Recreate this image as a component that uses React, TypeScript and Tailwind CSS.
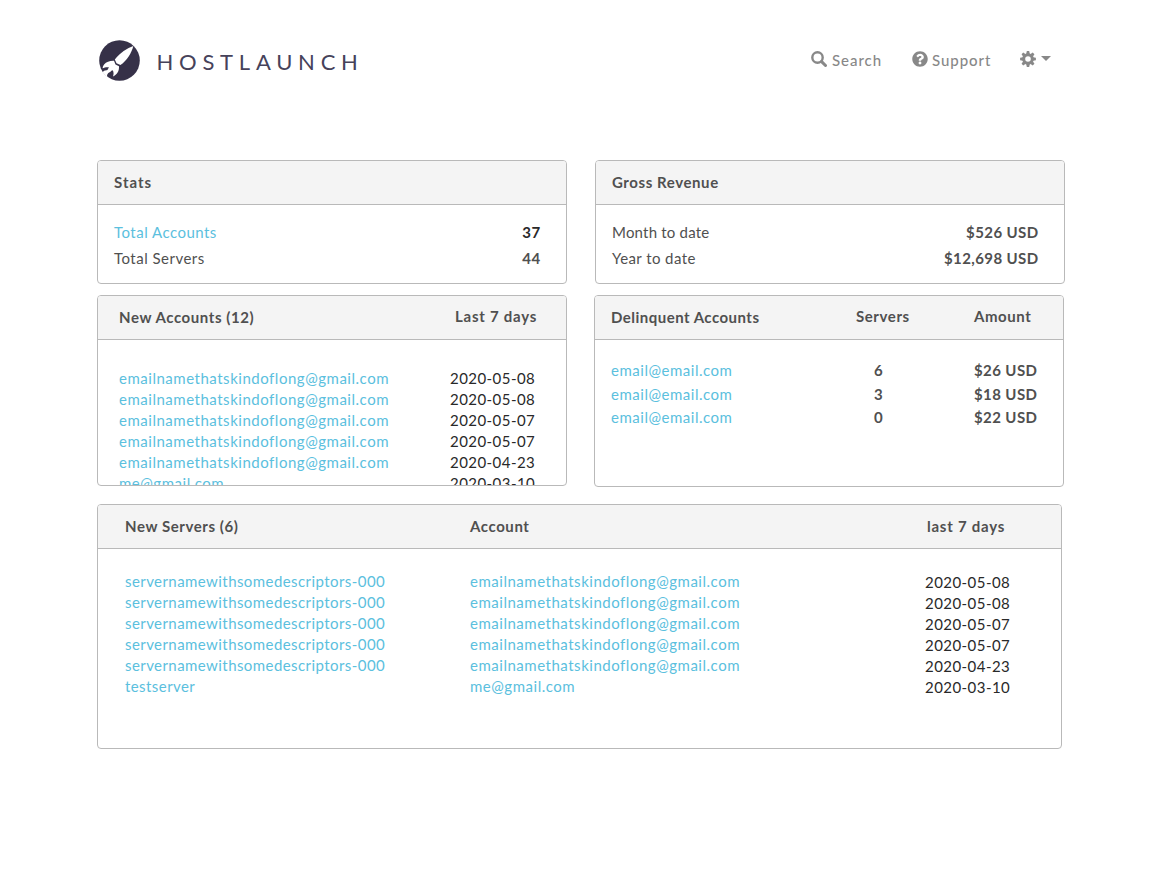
import type { ReactNode } from "react";
import { FaQuestionCircle } from "react-icons/fa";

const longEmail = "emailnamethatskindoflong@gmail.com";
const longServer = "servernamewithsomedescriptors-000";

const recent = [
  { server: longServer, email: longEmail, date: "2020-05-08" },
  { server: longServer, email: longEmail, date: "2020-05-08" },
  { server: longServer, email: longEmail, date: "2020-05-07" },
  { server: longServer, email: longEmail, date: "2020-05-07" },
  { server: longServer, email: longEmail, date: "2020-04-23" },
  { server: "testserver", email: "me@gmail.com", date: "2020-03-10" },
];

const delinquent = [
  { email: "email@email.com", servers: 6, amount: "$26 USD" },
  { email: "email@email.com", servers: 3, amount: "$18 USD" },
  { email: "email@email.com", servers: 0, amount: "$22 USD" },
];

function Rocket() {
  return (
    <svg className="h-[41px] w-[41px]" viewBox="0 0 41 41" aria-hidden="true">
      <circle cx="20.5" cy="20.5" r="20.3" fill="#363148" />
      <path d="M34.3 6C28.5 8 20.5 13 15.8 19.6L17.5 23.2L21.5 25.1C28 20.5 32.8 12.5 34.3 6Z" fill="#fff" />
      <path
        d="M15 20.7C11 20.5 7.2 21.8 5.3 24.3C4.2 25.8 3.7 27.1 3.6 28.3C5.5 27.4 8 26.8 10 27.4C9 28.6 9 29.4 8 30.3C6 30 4.6 31 3.6 32.2L8.2 37.2C7.6 34.9 8.6 33 10.6 32.2C12 31.6 12.4 30.4 13.6 30.2C14.8 31.8 14.8 34.2 14 36.5C18 34.7 20.3 31.1 20 26.2L16.5 24.6Z"
        fill="#fff"
      />
    </svg>
  );
}

function SearchIcon() {
  return (
    <svg className="mr-[5px] h-4 w-4 -translate-y-[2px]" viewBox="0 0 16 16" aria-hidden="true">
      <circle cx="6.5" cy="6.5" r="5.2" fill="none" stroke="#888" strokeWidth="2.4" />
      <path d="M10.6 10.6L14.5 14.5" stroke="#888" strokeWidth="3" strokeLinecap="round" />
    </svg>
  );
}

function Gear() {
  return (
    <svg className="h-4 w-4" viewBox="-8 -8 16 16" aria-hidden="true">
      <circle r="4.3" fill="none" stroke="#888" strokeWidth="3" />
      {[0, 45, 90, 135, 180, 225, 270, 315].map((angle) => (
        <path key={angle} d="M-1.8 -5L-1.2 -7.9H1.2L1.8 -5Z" fill="#888" transform={`rotate(${angle})`} />
      ))}
    </svg>
  );
}

function Panel({ size, header, children }: { size: string; header: ReactNode; children: ReactNode }) {
  return (
    <section className={`flex flex-col overflow-hidden rounded-[4px] border border-[#b9b9b9] bg-white ${size}`}>
      <header className="h-11 shrink-0 border-b border-[#b9b9b9] bg-[#f4f4f4] pt-[11px] font-bold leading-[21px] tracking-[0.58px]">
        {header}
      </header>
      {children}
    </section>
  );
}

export default function App() {
  return (
    <div className="h-[869px] w-[1159px] overflow-hidden bg-white pl-[97px] font-['Lato',sans-serif] text-[15px] leading-[21px] text-[#505050]">
      <div className="flex h-[160px] items-start pl-[1.5px] pt-[40px]">
        <a className="flex items-start">
          <Rocket />
          <span className="ml-[17px] mt-[2px] text-[22px] leading-[40px] tracking-[5.75px] text-[#46425a]">HOSTLAUNCH</span>
        </a>
        <nav className="ml-auto mr-[108px] flex pt-[10px] font-medium text-[#888]">
          <a className="flex w-[101px] items-center tracking-[0.95px]">
            <SearchIcon />
            Search
          </a>
          <a className="flex w-[108px] items-center tracking-[0.95px]">
            <FaQuestionCircle className="mr-[4px] h-4 w-4 -translate-y-[2px]" />
            Support
          </a>
          <a className="flex -translate-y-[2px] items-center gap-[5px]">
            <Gear />
            <svg className="h-[5px] w-[10px]" viewBox="0 0 10 5" aria-hidden="true">
              <path d="M0 0H10L5 5Z" fill="#888" />
            </svg>
          </a>
        </nav>
      </div>

      <div className="flex gap-7">
        <Panel size="h-[124px] w-[470px]" header={<h2 className="pl-4 tracking-[1px]">Stats</h2>}>
          <dl className="flex flex-col gap-[5px] pl-4 pr-[25.5px] pt-[17px]">
            <div className="flex justify-between">
              <dt className="tracking-[0.48px] text-[#5bc0de]">Total Accounts</dt>
              <dd className="font-bold tracking-[0.4px] text-[#292929]">37</dd>
            </div>
            <div className="flex justify-between">
              <dt className="tracking-[0.48px]">Total Servers</dt>
              <dd className="font-bold tracking-[0.4px]">44</dd>
            </div>
          </dl>
        </Panel>
        <Panel size="h-[124px] w-[470px]" header={<h2 className="pl-4">Gross Revenue</h2>}>
          <dl className="flex flex-col gap-[5px] pl-4 pr-[25.5px] pt-[17px]">
            <div className="flex justify-between">
              <dt className="tracking-[0.2px]">Month to date</dt>
              <dd className="font-bold tracking-[0.4px]">$526 USD</dd>
            </div>
            <div className="flex justify-between">
              <dt className="tracking-[0.42px]">Year to date</dt>
              <dd className="font-bold tracking-[0.4px]">$12,698 USD</dd>
            </div>
          </dl>
        </Panel>
      </div>

      <div className="mt-[11px] flex items-start gap-[27px]">
        <Panel
          size="h-[191px] w-[470px]"
          header={
            <div className="flex pl-[21px]">
              <h2 className="w-[336px]">New Accounts (12)</h2>
              <span className="-mt-px tracking-[0.75px]">Last 7 days</span>
            </div>
          }
        >
          <ul className="pl-[21px] pt-[28px]">
            {recent.map((row, i) => (
              <li key={i} className="flex">
                <a className="w-[331px] tracking-[0.52px] text-[#5bc0de]">{row.email}</a>
                <span className="tracking-[0.45px] text-[#292929]">{row.date}</span>
              </li>
            ))}
          </ul>
        </Panel>
        <Panel
          size="h-[192px] w-[470px]"
          header={
            <div className="flex pl-4">
              <h2 className="w-[245px] tracking-[0.48px]">Delinquent Accounts</h2>
              <span className="-mt-px w-[118px]">Servers</span>
              <span className="-mt-px">Amount</span>
            </div>
          }
        >
          <ul className="flex flex-col gap-[2.5px] pl-4 pt-[20px]">
            {delinquent.map((row, i) => (
              <li key={i} className="flex">
                <a className="w-[263px] tracking-[0.52px] text-[#5bc0de]">{row.email}</a>
                <span className="w-[100px] font-bold">{row.servers}</span>
                <span className="font-bold tracking-[0.4px]">{row.amount}</span>
              </li>
            ))}
          </ul>
        </Panel>
      </div>

      <div className="mt-[17px]">
        <Panel
          size="h-[245px] w-[965px]"
          header={
            <div className="flex pl-[27px]">
              <h2 className="w-[345px]">New Servers (6)</h2>
              <span className="w-[457px]">Account</span>
              <span className="tracking-[0.75px]">last 7 days</span>
            </div>
          }
        >
          <ul className="pl-[27px] pt-[22px]">
            {recent.map((row, i) => (
              <li key={i} className="flex">
                <a className="w-[345px] tracking-[0.43px] text-[#5bc0de]">{row.server}</a>
                <a className="w-[455px] tracking-[0.52px] text-[#5bc0de]">{row.email}</a>
                <span className="translate-y-px tracking-[0.45px] text-[#292929]">{row.date}</span>
              </li>
            ))}
          </ul>
        </Panel>
      </div>
    </div>
  );
}
